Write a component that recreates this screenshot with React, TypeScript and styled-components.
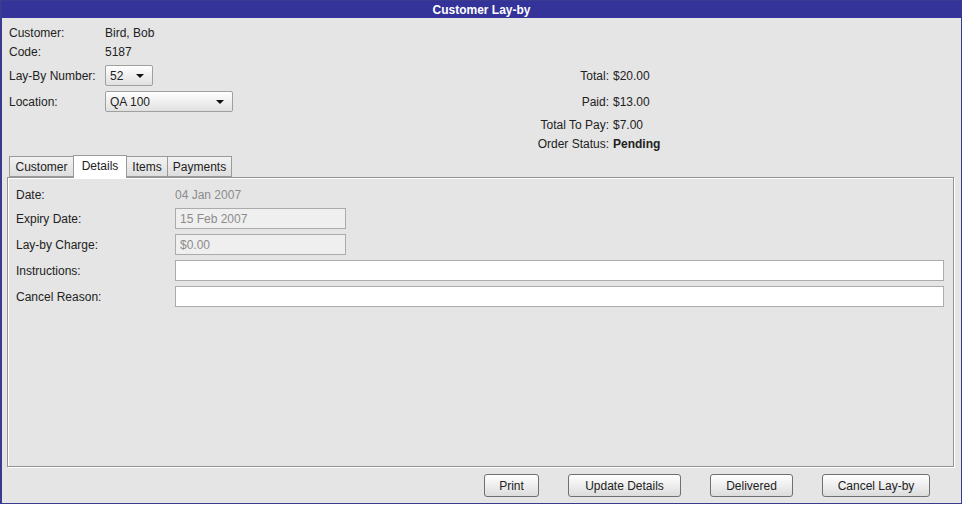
import React from "react"
import styled, { createGlobalStyle } from "styled-components"

const GlobalStyle = createGlobalStyle`
  html, body {
    margin: 0;
    padding: 0;
    background: #ffffff;
  }
  body {
    font-family: "Liberation Sans", Arial, sans-serif;
    font-size: 12px;
    color: #222222;
  }
`

const Frame = styled.div`
  box-sizing: border-box;
  width: 962px;
  height: 504px;
  border: 1px solid #3a3a8e;
  border-left-width: 2px;
  background: #e5e5e5;
  display: flex;
  flex-direction: column;
`

const TitleBar = styled.div`
  height: 17px;
  background: #333399;
  color: #ffffff;
  font-weight: bold;
  font-size: 12px;
  display: flex;
  align-items: center;
  justify-content: center;
`

const Body = styled.div`
  flex: 1;
  display: flex;
  flex-direction: column;
  padding: 0 7px 0 5px;
`

const Header = styled.div`
  display: grid;
  grid-template-columns: 96px 300px 204px 1fr;
  grid-template-rows: 18px 20px 27px 25px 22px 16px;
  padding: 6px 0 0 2px;
  align-items: center;
`

const Label = styled.div<{ $row: number }>`
  grid-column: 1;
  grid-row: ${({ $row }) => $row};
  white-space: nowrap;
`

const Value = styled.div<{ $row: number }>`
  grid-column: 2;
  grid-row: ${({ $row }) => $row};
`

const SumLabel = styled.div<{ $row: number }>`
  grid-column: 3;
  grid-row: ${({ $row }) => $row};
  text-align: right;
  white-space: nowrap;
`

const SumValue = styled.div<{ $row: number; $bold?: boolean }>`
  grid-column: 4;
  grid-row: ${({ $row }) => $row};
  padding-left: 4px;
  font-weight: ${({ $bold }) => ($bold ? "bold" : "normal")};
`

const Combo = styled.div<{ $width: number }>`
  box-sizing: border-box;
  width: ${({ $width }) => $width}px;
  height: 21px;
  border: 1px solid #a0a0a0;
  border-radius: 2px;
  background: linear-gradient(#ffffff, #ececec 60%, #e0e0e0);
  display: flex;
  align-items: center;
  justify-content: space-between;
  padding: 0 8px 0 4px;
`

const Arrow = styled.span`
  width: 0;
  height: 0;
  border-left: 4px solid transparent;
  border-right: 4px solid transparent;
  border-top: 4px solid #111111;
`

const TabStrip = styled.div`
  display: flex;
  align-items: flex-end;
  margin-top: 3px;
  padding-left: 3px;
  height: 22px;
  position: relative;
  z-index: 1;
`

const Tab = styled.div<{ $width: number; $active?: boolean }>`
  box-sizing: border-box;
  width: ${({ $width }) => $width}px;
  height: ${({ $active }) => ($active ? 23 : 21)}px;
  margin-bottom: ${({ $active }) => ($active ? -1 : 0)}px;
  border: 1px solid #9a9a9a;
  border-bottom: ${({ $active }) => ($active ? "none" : "1px solid #9a9a9a")};
  margin-left: -1px;
  background: ${({ $active }) =>
    $active ? "#ffffff" : "linear-gradient(#f2f2f2, #dedede)"};
  display: flex;
  align-items: ${({ $active }) => ($active ? "flex-start" : "center")};
  padding-top: ${({ $active }) => ($active ? 3 : 0)}px;
  justify-content: center;
  font-size: 12px;
`

const Panel = styled.div`
  box-sizing: border-box;
  height: 290px;
  border: 1px solid #939393;
  box-shadow: inset 1px 1px 0 #ffffff, 1px 1px 0 #ffffff;
  display: grid;
  grid-template-columns: 159px 1fr;
  grid-template-rows: 16px 21px 21px 21px 21px;
  row-gap: 5px;
  align-items: center;
  padding: 9px 9px 0 8px;
  align-content: start;
`

const Field = styled.div<{ $width?: number; $enabled?: boolean }>`
  box-sizing: border-box;
  width: ${({ $width }) => ($width ? `${$width}px` : "100%")};
  height: 21px;
  border: 1px solid #ababab;
  background: ${({ $enabled }) => ($enabled ? "#ffffff" : "#efefef")};
  color: #8c8c8c;
  display: flex;
  align-items: center;
  padding-left: 4px;
`

const Static = styled.div`
  color: #8c8c8c;
`

const ButtonRow = styled.div`
  display: flex;
  justify-content: flex-end;
  gap: 29px;
  padding: 7px 24px 0 0;
`

const Button = styled.button<{ $width: number }>`
  box-sizing: border-box;
  width: ${({ $width }) => $width}px;
  height: 23px;
  border: 1px solid #707070;
  border-radius: 3px;
  background: linear-gradient(#ffffff, #eeeeee 50%, #dcdcdc);
  font-family: "Liberation Sans", Arial, sans-serif;
  font-size: 12px;
  color: #222222;
  padding: 0;
`

const App = () => {
  return (
    <>
      <GlobalStyle />
      <Frame>
        <TitleBar>Customer Lay-by</TitleBar>
        <Body>
          <Header>
            <Label $row={1}>Customer:</Label>
            <Value $row={1}>Bird, Bob</Value>
            <Label $row={2}>Code:</Label>
            <Value $row={2}>5187</Value>
            <Label $row={3}>Lay-By Number:</Label>
            <Value $row={3}>
              <Combo $width={48}>
                52 <Arrow />
              </Combo>
            </Value>
            <Label $row={4}>Location:</Label>
            <Value $row={4}>
              <Combo $width={128}>
                QA 100 <Arrow />
              </Combo>
            </Value>
            <SumLabel $row={3}>Total:</SumLabel>
            <SumValue $row={3}>$20.00</SumValue>
            <SumLabel $row={4}>Paid:</SumLabel>
            <SumValue $row={4}>$13.00</SumValue>
            <SumLabel $row={5}>Total To Pay:</SumLabel>
            <SumValue $row={5}>$7.00</SumValue>
            <SumLabel $row={6}>Order Status:</SumLabel>
            <SumValue $row={6} $bold>
              Pending
            </SumValue>
          </Header>
          <TabStrip>
            <Tab $width={65}>Customer</Tab>
            <Tab $width={54} $active>
              Details
            </Tab>
            <Tab $width={42}>Items</Tab>
            <Tab $width={65}>Payments</Tab>
          </TabStrip>
          <Panel>
            <div>Date:</div>
            <Static>04 Jan 2007</Static>
            <div>Expiry Date:</div>
            <Field $width={171}>15 Feb 2007</Field>
            <div>Lay-by Charge:</div>
            <Field $width={171}>$0.00</Field>
            <div>Instructions:</div>
            <Field $enabled />
            <div>Cancel Reason:</div>
            <Field $enabled />
          </Panel>
          <ButtonRow>
            <Button $width={55}>Print</Button>
            <Button $width={113}>Update Details</Button>
            <Button $width={83}>Delivered</Button>
            <Button $width={108}>Cancel Lay-by</Button>
          </ButtonRow>
        </Body>
      </Frame>
    </>
  )
}

export default App
